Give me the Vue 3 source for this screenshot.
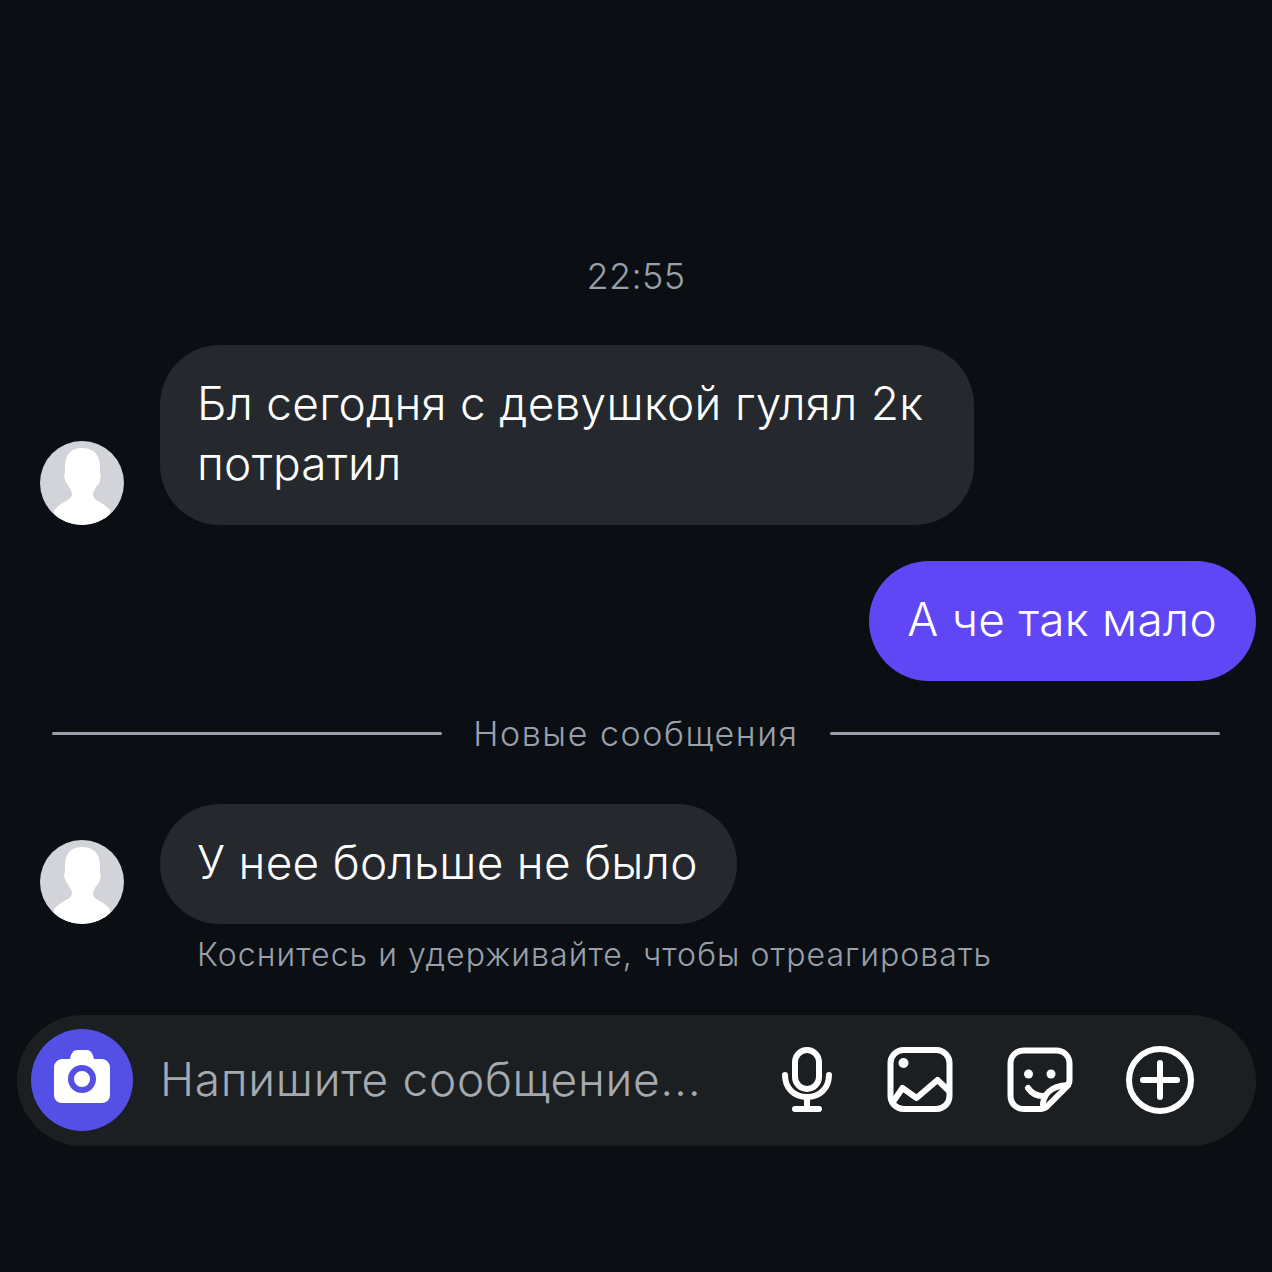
<script setup>
const silhouette = 'M42 7C32 7 26 12 25 24L25 32C24 34 24 37 25 39C26 42 28 44 29 46L32 52C32 56 30 58 26 60C22 62 18 65 14 69L14 84H70V69C66 65 62 62 58 60C54 58 53 56 53 52L56 46C58 44 60 42 60 39C61 37 61 34 60 32L60 24C59 12 52 7 42 7Z'
</script>

<template>
  <main class="screen">
    <p class="time">22:55</p>

    <section class="row">
      <svg class="avatar" viewBox="0 0 84 84" aria-hidden="true">
        <clipPath id="avatar-clip-a"><circle cx="42" cy="42" r="42" /></clipPath>
        <g clip-path="url(#avatar-clip-a)">
          <rect width="84" height="84" fill="#d2d4d9" />
          <path :d="silhouette" fill="#ffffff" />
        </g>
      </svg>
      <div class="bubble incoming wide">Бл сегодня с девушкой гулял 2к потратил</div>
    </section>

    <section class="row outgoing-row">
      <div class="bubble outgoing">А че так мало</div>
    </section>

    <div class="divider">
      <span class="line"></span>
      <span class="divider-label">Новые сообщения</span>
      <span class="line"></span>
    </div>

    <section class="row">
      <svg class="avatar" viewBox="0 0 84 84" aria-hidden="true">
        <clipPath id="avatar-clip-b"><circle cx="42" cy="42" r="42" /></clipPath>
        <g clip-path="url(#avatar-clip-b)">
          <rect width="84" height="84" fill="#d2d4d9" />
          <path :d="silhouette" fill="#ffffff" />
        </g>
      </svg>
      <div class="bubble incoming">У нее больше не было</div>
    </section>

    <p class="hint">Коснитесь и удерживайте, чтобы отреагировать</p>

    <footer class="composer">
      <div class="camera">
        <svg width="60" height="60" viewBox="-2 0 60 60" aria-hidden="true">
          <path d="M8 9H16C17 4 19 0 23 0H33C37 0 39 4 40 9H48C52 9 56 13 56 17V45C56 50 52 53 48 53H8C4 53 0 50 0 45V17C0 13 4 9 8 9Z" fill="#ffffff" />
          <circle cx="28" cy="29" r="11" fill="none" stroke="#5450e6" stroke-width="6" />
        </svg>
      </div>
      <span class="placeholder">Напишите сообщение...</span>
      <div class="icons">
        <svg class="icon mic" viewBox="0 0 72 72" aria-hidden="true">
          <rect x="24" y="6" width="24" height="39" rx="12" />
          <path d="M14 31C14 44 23 53 36 53C49 53 58 44 58 31M36 53V65M24 65H48" />
        </svg>
        <svg class="icon" viewBox="0 0 72 72" aria-hidden="true">
          <rect x="6.500" y="6" width="59" height="59" rx="13" />
          <circle class="solid" cx="19.500" cy="19" r="5" />
          <path d="M9 58L18.500 44L32.500 54L53.500 36L65 47" />
        </svg>
        <svg class="icon" viewBox="0 0 72 72" aria-hidden="true">
          <path d="M20 6.500H52C60 6.500 65.500 12 65.500 20V36C65.500 39 64.500 41 62.500 43L43 62.500C41 64.500 39 65 36 65H20C12 65 6.500 59.500 6.500 51.500V20C6.500 12 12 6.500 20 6.500Z" />
          <circle class="solid" cx="24.500" cy="30" r="4.500" />
          <circle class="solid" cx="47" cy="30" r="4.500" />
          <path d="M24 44C28 50 33 52 39 52M39 64C38 50 47 42 64 41" />
        </svg>
        <svg class="icon" viewBox="0 0 72 72" aria-hidden="true">
          <circle cx="36" cy="36" r="31" />
          <path d="M19 36H53M36 19V53" />
        </svg>
      </div>
    </footer>
  </main>
</template>

<style scoped>
.screen {
  box-sizing: border-box;
  width: 1272px;
  height: 1272px;
  padding-top: 256px;
  background: #0b0f14;
  color: #ffffff;
  font-family: Inter, "Liberation Sans", sans-serif;
  font-weight: 320;
  overflow: hidden;
}
.time {
  margin: 0 0 49px;
  height: 40px;
  line-height: 40px;
  text-align: center;
  font-size: 36px;
  letter-spacing: 0.4px;
  color: #9aa0ab;
}
.row {
  display: flex;
  align-items: flex-end;
  gap: 36px;
  padding-left: 40px;
  margin-bottom: 36px;
}
.avatar {
  width: 84px;
  height: 84px;
  flex: none;
}
.bubble {
  box-sizing: border-box;
  padding: 28px 39px 32px 37px;
  font-size: 46px;
  line-height: 60px;
  letter-spacing: 0.28px;
  border-radius: 60px;
}
.incoming {
  background: #25292d;
}
.wide {
  width: 814px;
}
.outgoing-row {
  justify-content: flex-end;
  padding: 0 16px 0 0;
  margin-bottom: 32px;
}
.outgoing {
  padding-left: 38px;
  background: #5f47f5;
}
.divider {
  display: flex;
  align-items: center;
  gap: 31px;
  height: 40px;
  margin: 0 52px 51px;
}
.line {
  flex: 1;
  height: 3px;
  border-radius: 2px;
  background: #9aa0ab;
}
.divider-label {
  font-size: 34px;
  letter-spacing: 1.55px;
  color: #9aa0ab;
}
.row + .hint {
  margin-top: -25px;
}
.hint {
  margin: 0 0 40px;
  padding-left: 197px;
  height: 40px;
  line-height: 40px;
  font-size: 32px;
  letter-spacing: 1.07px;
  color: #9aa0ab;
}
.composer {
  box-sizing: border-box;
  display: flex;
  align-items: center;
  height: 131px;
  margin: 0 16px 0 17px;
  padding-left: 14px;
  border-radius: 66px;
  background: #1c1f21;
}
.camera {
  display: flex;
  align-items: center;
  justify-content: center;
  flex: none;
  width: 102px;
  height: 102px;
  margin-bottom: 2px;
  border-radius: 50%;
  background: #5450e6;
}
.placeholder {
  margin: 0 0 4px 27px;
  font-size: 46px;
  letter-spacing: 0.7px;
  color: #a5a9b0;
  white-space: nowrap;
}
.icons {
  display: flex;
  align-items: center;
  margin: 0 0 1px auto;
  padding-right: 60px;
  gap: 48px;
}
.icon {
  width: 72px;
  height: 72px;
  flex: none;
  fill: none;
  stroke: #ffffff;
  stroke-width: 6;
  stroke-linecap: round;
  stroke-linejoin: round;
}
.icon.mic {
  margin-right: -7px;
}
.icon .solid {
  fill: #ffffff;
  stroke: none;
}
</style>
